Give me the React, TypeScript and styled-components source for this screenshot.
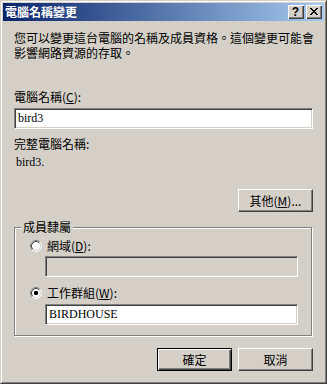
import React from 'react';
import styled, { createGlobalStyle } from 'styled-components';

const Global = createGlobalStyle`
  html, body { margin: 0; padding: 0; background: #D4D0C8; }
  body {
    font-family: "Noto Sans CJK TC", "Noto Sans", sans-serif;
    font-size: 12px;
    color: #000;
  }
`;

const Window = styled.div`
  width: 327px;
  height: 384px;
  box-sizing: border-box;
  border: 1px solid;
  border-color: #D4D0C8 #404040 #404040 #D4D0C8;
  background: #D4D0C8;
`;

const Frame = styled.div`
  height: 100%;
  box-sizing: border-box;
  border: 1px solid;
  border-color: #FFFFFF #808080 #808080 #FFFFFF;
  padding: 1px;
  display: flex;
  flex-direction: column;
`;

const TitleBar = styled.div`
  height: 18px;
  flex: none;
  background: linear-gradient(to right, #0A246A, #A6CAF0);
  display: flex;
  align-items: center;
  padding: 0 2px;
`;

const Title = styled.div`
  flex: 1;
  color: #fff;
  font-weight: bold;
  font-size: 12px;
  line-height: 14px;
  white-space: nowrap;
`;

const CaptionButtons = styled.div`
  display: flex;
  gap: 2px;
`;

const CaptionButton = styled.div`
  width: 16px;
  height: 14px;
  box-sizing: border-box;
  background: #D4D0C8;
  box-shadow: inset 1px 1px 0 #fff, inset -1px -1px 0 #404040, inset -2px -2px 0 #808080;
  display: flex;
  align-items: center;
  justify-content: center;
  padding: 0 1px 1px 0;
`;

const HelpGlyph = styled.span`
  font-family: "Liberation Sans", Arial, sans-serif;
  font-weight: bold;
  font-size: 12px;
  line-height: 1;
  color: #000;
`;

const Body = styled.div`
  flex: 1;
  display: flex;
  flex-direction: column;
  padding: 9px 11px 0;
`;

const Description = styled.p`
  margin: 0;
  line-height: 15px;
  white-space: nowrap;
`;

const Label = styled.div<{ $top: number }>`
  margin-top: ${(p) => p.$top}px;
  line-height: 14px;
  white-space: nowrap;
`;

const Value = styled.div`
  margin-top: 4px;
  line-height: 14px;
  font-family: "Liberation Serif", "Times New Roman", serif;
  font-size: 12px;
  padding-left: 2px;
`;

const Key = styled.span`
  text-decoration: underline;
`;

const TextBox = styled.div<{ $disabled?: boolean; $indent?: number; $width?: number; $top: number }>`
  margin-top: ${(p) => p.$top}px;
  margin-left: ${(p) => p.$indent ?? 0}px;
  width: ${(p) => (p.$width ? `${p.$width}px` : 'auto')};
  height: 21px;
  box-sizing: border-box;
  border: 1px solid;
  border-color: #808080 #FFFFFF #FFFFFF #808080;
  box-shadow: inset 1px 1px 0 #404040, inset -1px -1px 0 #D4D0C8;
  background: ${(p) => (p.$disabled ? '#D4D0C8' : '#FFFFFF')};
  display: flex;
  align-items: center;
  padding: 0 3px;
  font-family: "Liberation Serif", "Times New Roman", serif;
  font-size: 12px;
  white-space: nowrap;
`;

const ButtonRow = styled.div<{ $top: number }>`
  margin-top: ${(p) => p.$top}px;
  display: flex;
  justify-content: flex-end;
  gap: 6px;
`;

const Button = styled.div<{ $default?: boolean }>`
  width: 75px;
  height: 23px;
  box-sizing: border-box;
  background: #D4D0C8;
  display: flex;
  align-items: center;
  justify-content: center;
  line-height: 14px;
  white-space: nowrap;
  border: 1px solid;
  border-color: ${(p) => (p.$default ? '#000 #000 #000 #000' : '#FFFFFF #404040 #404040 #FFFFFF')};
  box-shadow: ${(p) =>
    p.$default
      ? 'inset 1px 1px 0 #fff, inset -1px -1px 0 #404040, inset -2px -2px 0 #808080'
      : 'inset -1px -1px 0 #808080'};
`;

const GroupBox = styled.fieldset`
  margin: 8px 1px 0 0;
  padding: 5px 0 10px 15px;
  min-inline-size: 0;
  border: 1px solid #808080;
  box-shadow: inset 1px 1px 0 #fff, 1px 1px 0 #fff;
  display: flex;
  flex-direction: column;
`;

const Legend = styled.legend`
  margin-left: -9px;
  padding: 0 2px;
  line-height: 14px;
  font-size: 12px;
  background: #D4D0C8;
`;

const RadioRow = styled.div<{ $top: number }>`
  margin-top: ${(p) => p.$top}px;
  height: 14px;
  display: flex;
  align-items: center;
  gap: 5px;
  line-height: 14px;
  white-space: nowrap;
`;

const Radio = ({ checked }: { checked?: boolean }) => (
  <svg width="12" height="12" viewBox="0 0 12 12" style={{ flex: 'none' }}>
    <circle cx="6" cy="6" r="5" fill="#fff" />
    <path d="M2.11 9.89 A5.5 5.5 0 0 1 9.89 2.11" fill="none" stroke="#808080" strokeWidth="1" />
    <path d="M9.89 2.11 A5.5 5.5 0 0 1 2.11 9.89" fill="none" stroke="#FFFFFF" strokeWidth="1" />
    <path d="M2.82 9.18 A4.5 4.5 0 0 1 9.18 2.82" fill="none" stroke="#404040" strokeWidth="1" />
    <path d="M9.18 2.82 A4.5 4.5 0 0 1 2.82 9.18" fill="none" stroke="#D4D0C8" strokeWidth="1" />
    {checked && <rect x="4" y="4" width="4" height="4" rx="1.2" fill="#000" />}
  </svg>
);

const closePattern = [
  'XX....XX',
  '.XX..XX.',
  '..XXXX..',
  '...XX...',
  '..XXXX..',
  '.XX..XX.',
  'XX....XX',
];

const CloseIcon = () => (
  <svg width="8" height="7" viewBox="0 0 8 7" shapeRendering="crispEdges">
    {closePattern.flatMap((row, y) =>
      row.split('').map((c, x) => (c === 'X' ? <rect key={`${x}-${y}`} x={x} y={y} width="1" height="1" fill="#000" /> : null))
    )}
  </svg>
);

export default function App() {
  return (
    <>
      <Global />
      <Window>
        <Frame>
          <TitleBar>
            <Title>電腦名稱變更</Title>
            <CaptionButtons>
              <CaptionButton>
                <HelpGlyph>?</HelpGlyph>
              </CaptionButton>
              <CaptionButton>
                <CloseIcon />
              </CaptionButton>
            </CaptionButtons>
          </TitleBar>
          <Body>
            <Description>
              您可以變更這台電腦的名稱及成員資格。這個變更可能會
              <br />
              影響網路資源的存取。
            </Description>
            <Label $top={30}>
              電腦名稱(<Key>C</Key>):
            </Label>
            <TextBox $top={4}>bird3</TextBox>
            <Label $top={8}>完整電腦名稱:</Label>
            <Value>bird3.</Value>
            <ButtonRow $top={20}>
              <Button>
                其他(<Key>M</Key>)...
              </Button>
            </ButtonRow>
            <GroupBox>
              <Legend>成員隸屬</Legend>
              <RadioRow $top={0}>
                <Radio />
                <span>
                  網域(<Key>D</Key>):
                </span>
              </RadioRow>
              <TextBox $top={3} $indent={15} $width={253} $disabled />
              <RadioRow $top={9}>
                <Radio checked />
                <span>
                  工作群組(<Key>W</Key>):
                </span>
              </RadioRow>
              <TextBox $top={4} $indent={15} $width={253}>
                BIRDHOUSE
              </TextBox>
            </GroupBox>
            <ButtonRow $top={12}>
              <Button $default>確定</Button>
              <Button>取消</Button>
            </ButtonRow>
          </Body>
        </Frame>
      </Window>
    </>
  );
}
